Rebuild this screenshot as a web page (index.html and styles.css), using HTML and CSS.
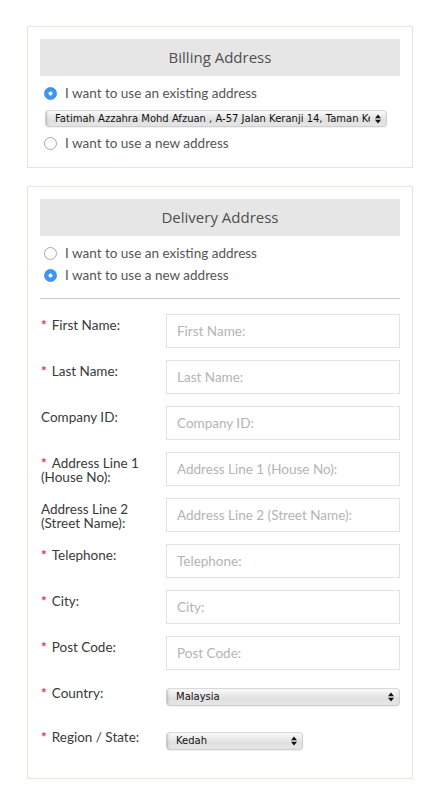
FILE: index.html
```html
<!DOCTYPE html>
<html lang="en">
<head>
<meta charset="utf-8">
<title>Checkout Address</title>
<link rel="stylesheet" href="styles.css">
</head>
<body>
<div class="page">
  <section class="box">
    <h2 class="box-title">Billing Address</h2>
    <div class="choices">
      <label class="radio"><input type="radio" name="billing" checked><span>I want to use an existing address</span></label>
      <div class="select-wrap select-address">
        <select><option>Fatimah Azzahra Mohd Afzuan , A-57 Jalan Keranji 14, Taman Keranji, Alor Setar</option></select>
        <svg class="arrows" viewBox="0 0 6 10" width="6" height="10"><path d="M0 4.2L3 0.5L6 4.2Z M0 5.8L3 9.5L6 5.8Z"/></svg>
      </div>
      <label class="radio gap-top"><input type="radio" name="billing"><span>I want to use a new address</span></label>
    </div>
  </section>

  <section class="box box-delivery">
    <h2 class="box-title">Delivery Address</h2>
    <div class="choices">
      <label class="radio"><input type="radio" name="delivery"><span>I want to use an existing address</span></label>
      <label class="radio tight"><input type="radio" name="delivery" checked><span>I want to use a new address</span></label>
    </div>
    <hr class="divider">
    <form class="form">
      <div class="form-row"><label class="lbl"><span class="req">*</span>First Name:</label><input type="text" placeholder="First Name:"></div>
      <div class="form-row"><label class="lbl"><span class="req">*</span>Last Name:</label><input type="text" placeholder="Last Name:"></div>
      <div class="form-row"><label class="lbl">Company ID:</label><input type="text" placeholder="Company ID:"></div>
      <div class="form-row"><label class="lbl"><span class="req">*</span>Address Line 1<br>(House No):</label><input type="text" placeholder="Address Line 1 (House No):"></div>
      <div class="form-row"><label class="lbl">Address Line 2<br>(Street Name):</label><input type="text" placeholder="Address Line 2 (Street Name):"></div>
      <div class="form-row"><label class="lbl"><span class="req">*</span>Telephone:</label><input type="text" placeholder="Telephone:"></div>
      <div class="form-row"><label class="lbl"><span class="req">*</span>City:</label><input type="text" placeholder="City:"></div>
      <div class="form-row"><label class="lbl"><span class="req">*</span>Post Code:</label><input type="text" placeholder="Post Code:"></div>
      <div class="form-row"><label class="lbl"><span class="req">*</span>Country:</label>
        <div class="select-wrap select-country">
          <select><option>Malaysia</option></select>
          <svg class="arrows" viewBox="0 0 6 10" width="6" height="10"><path d="M0 4.2L3 0.5L6 4.2Z M0 5.8L3 9.5L6 5.8Z"/></svg>
        </div>
      </div>
      <div class="form-row last"><label class="lbl"><span class="req">*</span>Region / State:</label>
        <div class="select-wrap select-region">
          <select><option>Kedah</option></select>
          <svg class="arrows" viewBox="0 0 6 10" width="6" height="10"><path d="M0 4.2L3 0.5L6 4.2Z M0 5.8L3 9.5L6 5.8Z"/></svg>
        </div>
      </div>
    </form>
  </section>
</div>
</body>
</html>
```
FILE: styles.css
```css
* { box-sizing: border-box; }
html, body { margin: 0; padding: 0; background: #fff; }
body { font-family: Lato, "Noto Sans", sans-serif; color: #3a3a3a; }

.page { margin: 26px 15px 0 27px; }

.box {
  border: 1px solid #e8e7d4;
  padding: 12px 12px 12px;
}
.box-delivery { margin-top: 18px; padding-bottom: 12px; }

.box-title {
  margin: 0;
  height: 37px;
  line-height: 37px;
  background: #e6e6e6;
  text-align: center;
  font-family: "Open Sans", sans-serif;
  font-weight: 500;
  font-size: 15px;
  color: #505050;
}

.choices { margin-bottom: 3px; }
.radio {
  display: flex;
  align-items: center;
  gap: 8px;
  height: 18px;
  margin-top: 8px;
  font-size: 13.5px;
  color: #555;
}
.radio.gap-top { margin-top: 7px; }
.radio.tight { margin-top: 4px; }
.radio input {
  appearance: none;
  -webkit-appearance: none;
  margin: 0 0 0 4px;
  width: 13px;
  height: 13px;
  border-radius: 50%;
  border: 1px solid #a8a8a8;
  background: #fff;
  flex: none;
}
.radio input:checked {
  border-color: #3b8ff2;
  background: radial-gradient(circle, #fff 0 1.8px, #3d95f6 2.3px);
}

.select-wrap { position: relative; }
.select-wrap select {
  appearance: none;
  -webkit-appearance: none;
  display: block;
  width: 100%;
  height: 100%;
  margin: 0;
  padding: 0 16px 0 9px;
  border: 1px solid #cfcfcf;
  border-top-color: #d8d8d8;
  border-radius: 4px;
  background: linear-gradient(to bottom, #fbfbfb 0%, #ececec 30%, #e0e0e0 60%, #e6e6e6 100%);
  box-shadow: inset 2px 0 2px -1px rgba(0,0,0,0.18), 0 1px 1px rgba(0,0,0,0.06);
  font-family: "DejaVu Sans", sans-serif;
  font-size: 10px;
  line-height: 16px;
  color: #111;
  overflow: hidden;
  white-space: nowrap;
}
.select-wrap .arrows {
  position: absolute;
  right: 6px;
  top: 50%;
  margin-top: -5px;
  fill: #111;
  pointer-events: none;
}
.select-address { margin: 8px 13px 0 5px; height: 17px; }
.select-country { width: 234px; height: 18px; margin: 6px 0 8px; }
.select-region { width: 137px; height: 18px; margin: 6px 0 6px; }

.divider {
  margin: 14px 0 15px;
  border: 0;
  border-top: 1px solid #cccccc;
}

.form { margin: 0; }
.form-row { display: flex; align-items: flex-start; margin-bottom: 12px; }
.form-row.last { margin-bottom: 10px; }
.lbl {
  width: 126px;
  flex: none;
  padding: 4px 0 0 1px;
  font-size: 13.5px;
  line-height: 14px;
  color: #3a3a3a;
}
.req { color: #e8323c; font-weight: 700; margin-right: 5px; }
.form-row input {
  width: 234px;
  height: 34px;
  margin: 0;
  border: 1px solid #e2e2e2;
  padding: 0 10px;
  font-family: Lato, "Noto Sans", sans-serif;
  font-size: 13.5px;
  color: #333;
  background: #fff;
  outline: none;
}
.form-row input::placeholder { color: #b4b4b4; }
```
